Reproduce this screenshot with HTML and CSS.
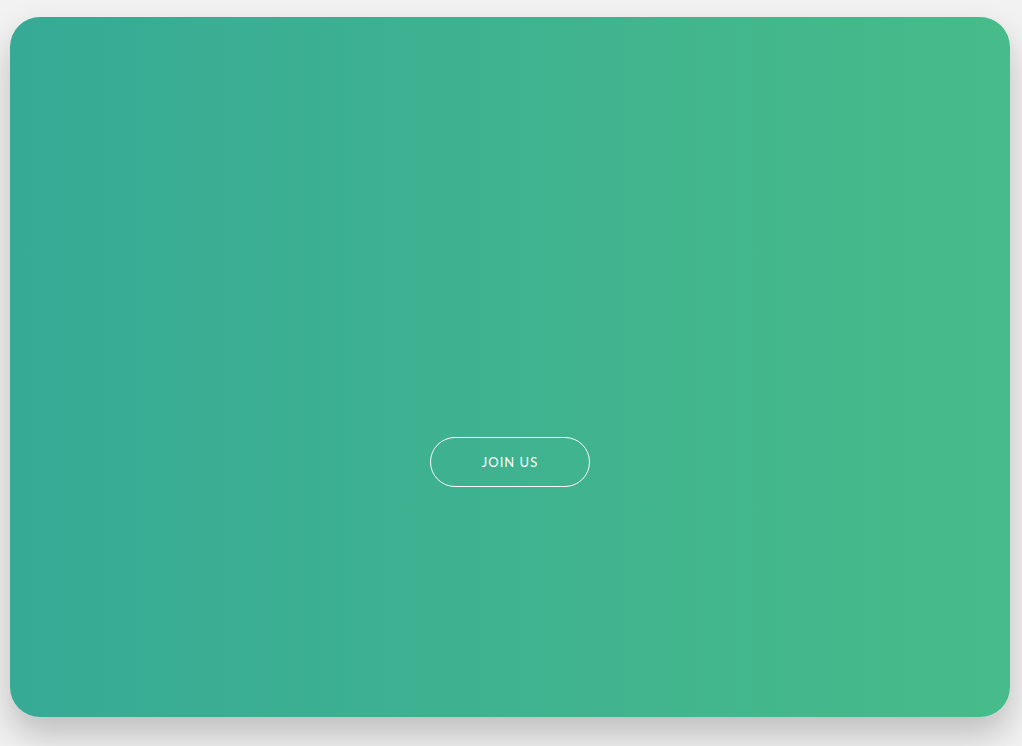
FILE: index.html
```html
<!DOCTYPE html>
<html lang="en">
<head>
<meta charset="utf-8">
<title>Join us</title>
<link rel="stylesheet" href="styles.css">
</head>
<body>
<main class="card">
  <a class="join-btn" href="#">JOIN US</a>
</main>
</body>
</html>
```
FILE: styles.css
```css
html, body {
  margin: 0;
  padding: 0;
  height: 100%;
}
body {
  background: #f2f2f2;
  font-family: "Lato", "Liberation Sans", sans-serif;
  overflow: hidden;
}
.card {
  box-sizing: border-box;
  width: 1000px;
  height: 700px;
  margin: 17px 0 0 10px;
  border-radius: 30px;
  background: linear-gradient(to right, #37aa96, #47bb89);
  box-shadow: 0 18px 35px rgba(0, 0, 0, 0.22);
  display: flex;
  align-items: center;
  justify-content: center;
  padding-top: 190px;
}
.join-btn {
  box-sizing: border-box;
  width: 160px;
  height: 50px;
  border: 1px solid #ffffff;
  border-radius: 25px;
  color: #ffffff;
  text-decoration: none;
  font-size: 13px;
  letter-spacing: 1px;
  display: flex;
  align-items: center;
  justify-content: center;
}
```
